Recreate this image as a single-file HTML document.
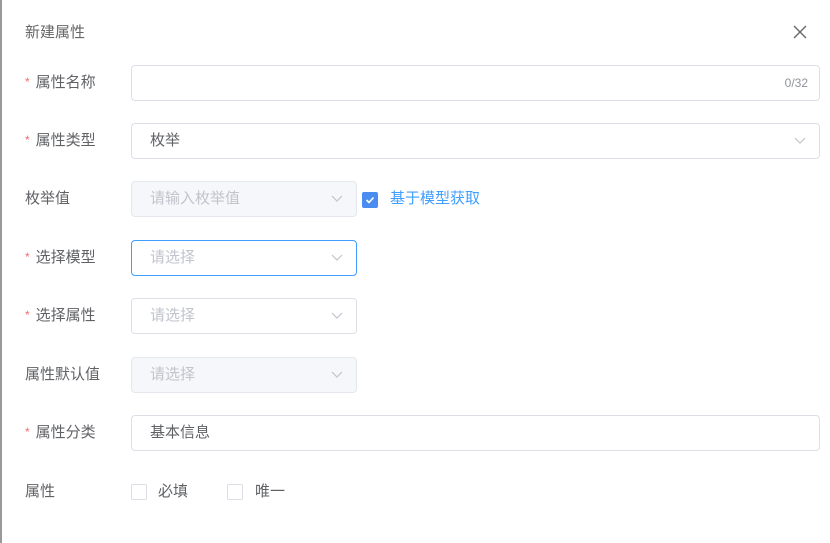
<!DOCTYPE html>
<html><head><meta charset="utf-8"><style>
*{box-sizing:border-box;margin:0;padding:0}
body{width:830px;height:543px;background:#fff;font-family:"Liberation Sans","Noto Sans CJK SC",sans-serif;font-size:15px;color:#606266;position:relative;overflow:hidden}
.edge{position:absolute;left:0;top:0;width:2px;height:543px;background:#999}
.t{position:absolute;left:25px;top:21px;font-size:15px;color:#666}
.x{position:absolute;left:792px;top:24px}
.lab{position:absolute;left:25px;height:20px;line-height:20px}
.lab i{color:#f56c6c;font-style:normal;font-size:12px;margin-right:6px;position:relative;top:-1px}
.in{position:absolute;left:131px;height:36px;border:1px solid #dcdfe6;border-radius:4px;background:#fff;line-height:34px;padding-left:18px;color:#606266}
.in.d{background:#f5f7fa;border-color:#e4e7ed;color:#c0c4cc}
.in.p{color:#c0c4cc}
.in.f{border-color:#409eff}
.ar{position:absolute;right:13px;top:13px}
.cnt{position:absolute;right:11px;top:0;font-size:12px;color:#909399}
.cb{position:absolute;width:16px;height:16px;border:1px solid #dcdfe6;border-radius:2px;background:#fff}
</style></head><body>
<div class="edge"></div>
<div class="t">新建属性</div>
<svg class="x" width="16" height="16" viewBox="0 0 16 16"><path d="M2 2L14 14M14 2L2 14" stroke="#666" stroke-width="1.4"/></svg>

<div class="lab" style="top:73px"><i>*</i>属性名称</div>
<div class="in" style="top:65px;width:689px"><span class="cnt">0/32</span></div>

<div class="lab" style="top:131px"><i>*</i>属性类型</div>
<div class="in" style="top:123px;width:689px">枚举<svg class="ar" width="12" height="8" viewBox="0 0 12 8"><path d="M1 1L6 6L11 1" fill="none" stroke="#c0c4cc" stroke-width="1.2"/></svg></div>

<div class="lab" style="top:189px">枚举值</div>
<div class="in d" style="top:181px;width:226px">请输入枚举值<svg class="ar" width="12" height="8" viewBox="0 0 12 8"><path d="M1 1L6 6L11 1" fill="none" stroke="#c0c4cc" stroke-width="1.2"/></svg></div>
<div class="cb" style="left:362px;top:192px;background:#4a8cf0;border-color:#4a8cf0"><svg width="14" height="14" viewBox="0 0 14 14" style="position:absolute;left:0;top:0"><path d="M3.5 7L6 9.5L10.5 4.5" fill="none" stroke="#fff" stroke-width="1.6"/></svg></div>
<div style="position:absolute;left:390px;top:189px;line-height:20px;color:#409eff">基于模型获取</div>

<div class="lab" style="top:248px"><i>*</i>选择模型</div>
<div class="in p f" style="top:240px;width:226px">请选择<svg class="ar" width="12" height="8" viewBox="0 0 12 8"><path d="M1 1L6 6L11 1" fill="none" stroke="#c0c4cc" stroke-width="1.2"/></svg></div>

<div class="lab" style="top:306px"><i>*</i>选择属性</div>
<div class="in p" style="top:298px;width:226px">请选择<svg class="ar" width="12" height="8" viewBox="0 0 12 8"><path d="M1 1L6 6L11 1" fill="none" stroke="#c0c4cc" stroke-width="1.2"/></svg></div>

<div class="lab" style="top:365px">属性默认值</div>
<div class="in d" style="top:357px;width:226px">请选择<svg class="ar" width="12" height="8" viewBox="0 0 12 8"><path d="M1 1L6 6L11 1" fill="none" stroke="#c0c4cc" stroke-width="1.2"/></svg></div>

<div class="lab" style="top:423px"><i>*</i>属性分类</div>
<div class="in" style="top:415px;width:689px">基本信息</div>

<div class="lab" style="top:482px">属性</div>
<div class="cb" style="left:131px;top:484px"></div>
<div style="position:absolute;left:158px;top:482px;line-height:20px">必填</div>
<div class="cb" style="left:227px;top:484px"></div>
<div style="position:absolute;left:255px;top:482px;line-height:20px">唯一</div>
</body></html>
